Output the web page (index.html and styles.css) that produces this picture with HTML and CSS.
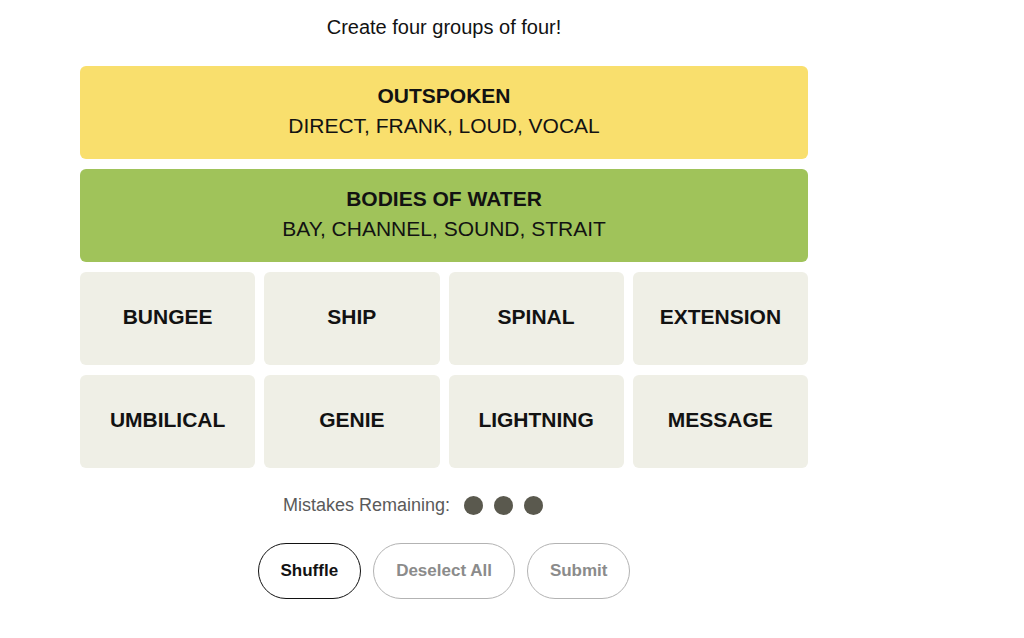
FILE: index.html
```html
<!DOCTYPE html>
<html>

<head>
    <title>Connections</title>
    <link rel="stylesheet" href="styles.css">
</head>

<body>
    <div class="game">
        <p class="prompt">Create four groups of four!</p>

        <div class="board">
            <div class="solved yellow">
                <h3>OUTSPOKEN</h3>
                <p>DIRECT, FRANK, LOUD, VOCAL</p>
            </div>
            <div class="solved green">
                <h3>BODIES OF WATER</h3>
                <p>BAY, CHANNEL, SOUND, STRAIT</p>
            </div>

            <div class="tiles">
                <div class="tile">BUNGEE</div>
                <div class="tile">SHIP</div>
                <div class="tile">SPINAL</div>
                <div class="tile">EXTENSION</div>
                <div class="tile">UMBILICAL</div>
                <div class="tile">GENIE</div>
                <div class="tile">LIGHTNING</div>
                <div class="tile">MESSAGE</div>
            </div>
        </div>

        <div class="mistakes">
            <span>Mistakes Remaining:</span>
            <span class="dot"></span>
            <span class="dot"></span>
            <span class="dot"></span>
        </div>

        <div class="controls">
            <button class="btn active" id="shuffleBtn">Shuffle</button>
            <button class="btn" disabled>Deselect All</button>
            <button class="btn" disabled>Submit</button>
        </div>
    </div>
</body>

</html>
```

FILE: styles.css
```css
body {
    margin: 0;
    background-color: #fff;
    font-family: "Liberation Sans", Arial, sans-serif;
    color: #121212;
}

.game {
    width: 728px;
    margin-left: 80px;
    display: flex;
    flex-direction: column;
    align-items: center;
}

.prompt {
    margin: 15px 0 0;
    height: 51px;
    font-size: 20px;
    line-height: 24px;
}

.board {
    width: 100%;
    display: flex;
    flex-direction: column;
    gap: 10px;
}

.solved {
    height: 93px;
    padding-bottom: 4px;
    box-sizing: border-box;
    border-radius: 6px;
    display: flex;
    flex-direction: column;
    justify-content: center;
    align-items: center;
    text-align: center;
}

.solved h3 {
    margin: 0 0 4px;
    font-size: 21px;
    font-weight: bold;
    line-height: 26px;
}

.solved p {
    margin: 0;
    font-size: 21px;
    line-height: 26px;
}

.yellow {
    background-color: #f9df6d;
}

.green {
    background-color: #a0c35a;
}

.tiles {
    display: grid;
    grid-template-columns: repeat(4, 1fr);
    gap: 10px 9px;
}

.tile {
    height: 93px;
    padding-bottom: 4px;
    box-sizing: border-box;
    background-color: #efefe6;
    border-radius: 6px;
    display: flex;
    justify-content: center;
    align-items: center;
    font-size: 21px;
    font-weight: bold;
}

.mistakes {
    margin-top: 26px;
    margin-right: 62px;
    height: 22px;
    display: flex;
    align-items: center;
    gap: 11px;
    font-size: 18px;
    color: #5a5a5a;
}

.mistakes span:first-child {
    margin-right: 3px;
}

.dot {
    width: 19px;
    height: 19px;
    border-radius: 50%;
    background-color: #5a594e;
}

.controls {
    margin-top: 27px;
    display: flex;
    gap: 12px;
}

.btn {
    height: 56px;
    padding: 0 22px;
    border: 1px solid #b3b3b3;
    border-radius: 28px;
    background-color: #fff;
    font-family: "Liberation Sans", Arial, sans-serif;
    font-size: 17px;
    font-weight: bold;
    color: #8b8b8b;
}

.btn.active {
    border-color: #121212;
    color: #121212;
    cursor: pointer;
}
```
